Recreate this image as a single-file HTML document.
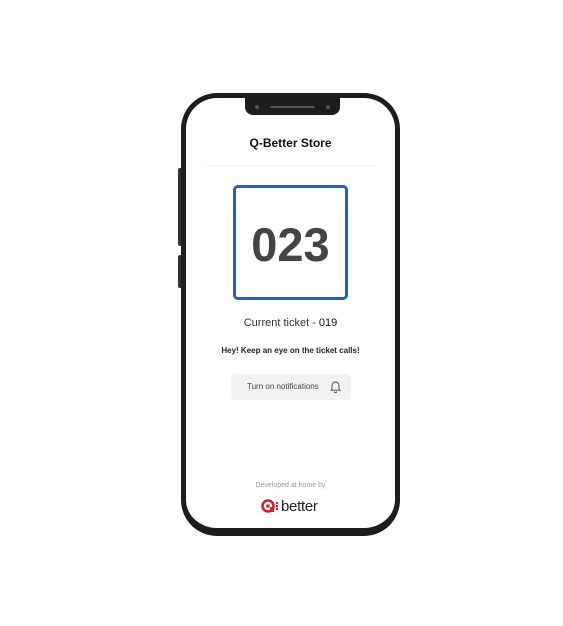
<html><head><style>
body{margin:0;width:563px;height:626px;background:#fff;position:relative;overflow:hidden;font-family:"Liberation Sans",sans-serif}
.ph{position:absolute;left:181px;top:93px;width:219px;height:443px;box-sizing:border-box;border:5px solid #1d1d1d;border-bottom-width:8px;border-radius:36px;background:#fff}
.btn{position:absolute;left:178px;width:4px;background:#333;border-radius:2px}
.notch{position:absolute;left:245px;top:97px;width:95px;height:18px;background:#1d1d1d;border-radius:0 0 8px 8px}
.t{position:absolute;left:0;width:563px;text-align:center}
</style></head><body>
<div class="btn" style="top:168px;height:78px"></div>
<div class="btn" style="top:255px;height:33px"></div>
<div class="ph"></div>
<div class="notch"><div style="position:absolute;left:10px;top:8px;width:4px;height:4px;border-radius:50%;background:#555"></div><div style="position:absolute;left:25px;top:9px;width:45px;height:2px;background:#555;border-radius:1px"></div><div style="position:absolute;left:81px;top:8px;width:4px;height:4px;border-radius:50%;background:#555"></div></div>
<div class="t" style="top:136px;font-size:12px;font-weight:bold;color:#111;left:9px">Q-Better Store</div>
<div style="position:absolute;left:206px;top:165px;width:170px;height:1px;background:#eee"></div>
<div style="position:absolute;left:233px;top:185px;width:115px;height:115px;box-sizing:border-box;border:3px solid #1e5fd8;border-radius:5px;text-align:center;line-height:113px;font-size:47px;font-weight:bold;color:#444">023</div>
<div class="t" style="top:317px;font-size:11px;color:#333;left:9px">Current ticket - <span style="color:#111">019</span></div>
<div class="t" style="top:346px;font-size:8px;font-weight:bold;color:#222;left:9px">Hey! Keep an eye on the ticket calls!</div>
<div style="position:absolute;left:231px;top:374px;width:120px;height:26px;background:#f2f2f2;border-radius:4px;font-size:8px;color:#444;line-height:26px;box-sizing:border-box;padding-left:16px">Turn on notifications
<svg style="position:absolute;left:99px;top:6px" width="11" height="13" viewBox="0 0 11 13"><path d="M2 9V5.5a3.5 3.5 0 0 1 7 0V9l1 1.2H1L2 9zM4.3 11.5a1.2 1.2 0 0 0 2.4 0" fill="none" stroke="#444" stroke-width="0.9"/></svg></div>
<div class="t" style="top:482px;font-size:7px;color:#999;left:9px">Developed at home by</div>
<div style="position:absolute;left:261px;top:497px;height:18px;display:flex;align-items:center">
<svg width="14" height="14" viewBox="0 0 14 14"><circle cx="7" cy="7" r="5.5" fill="none" stroke="#d8202a" stroke-width="2.6"/><circle cx="7" cy="7" r="1.8" fill="#d8202a"/><rect x="9" y="8" width="4" height="5" fill="#d8202a"/></svg>
<span style="display:inline-block;width:2px;height:8px;border-left:2px dotted #d8202a;margin:0 1px"></span>
<span style="font-size:15px;color:#222;letter-spacing:-0.3px">better</span></div>
</body></html>
